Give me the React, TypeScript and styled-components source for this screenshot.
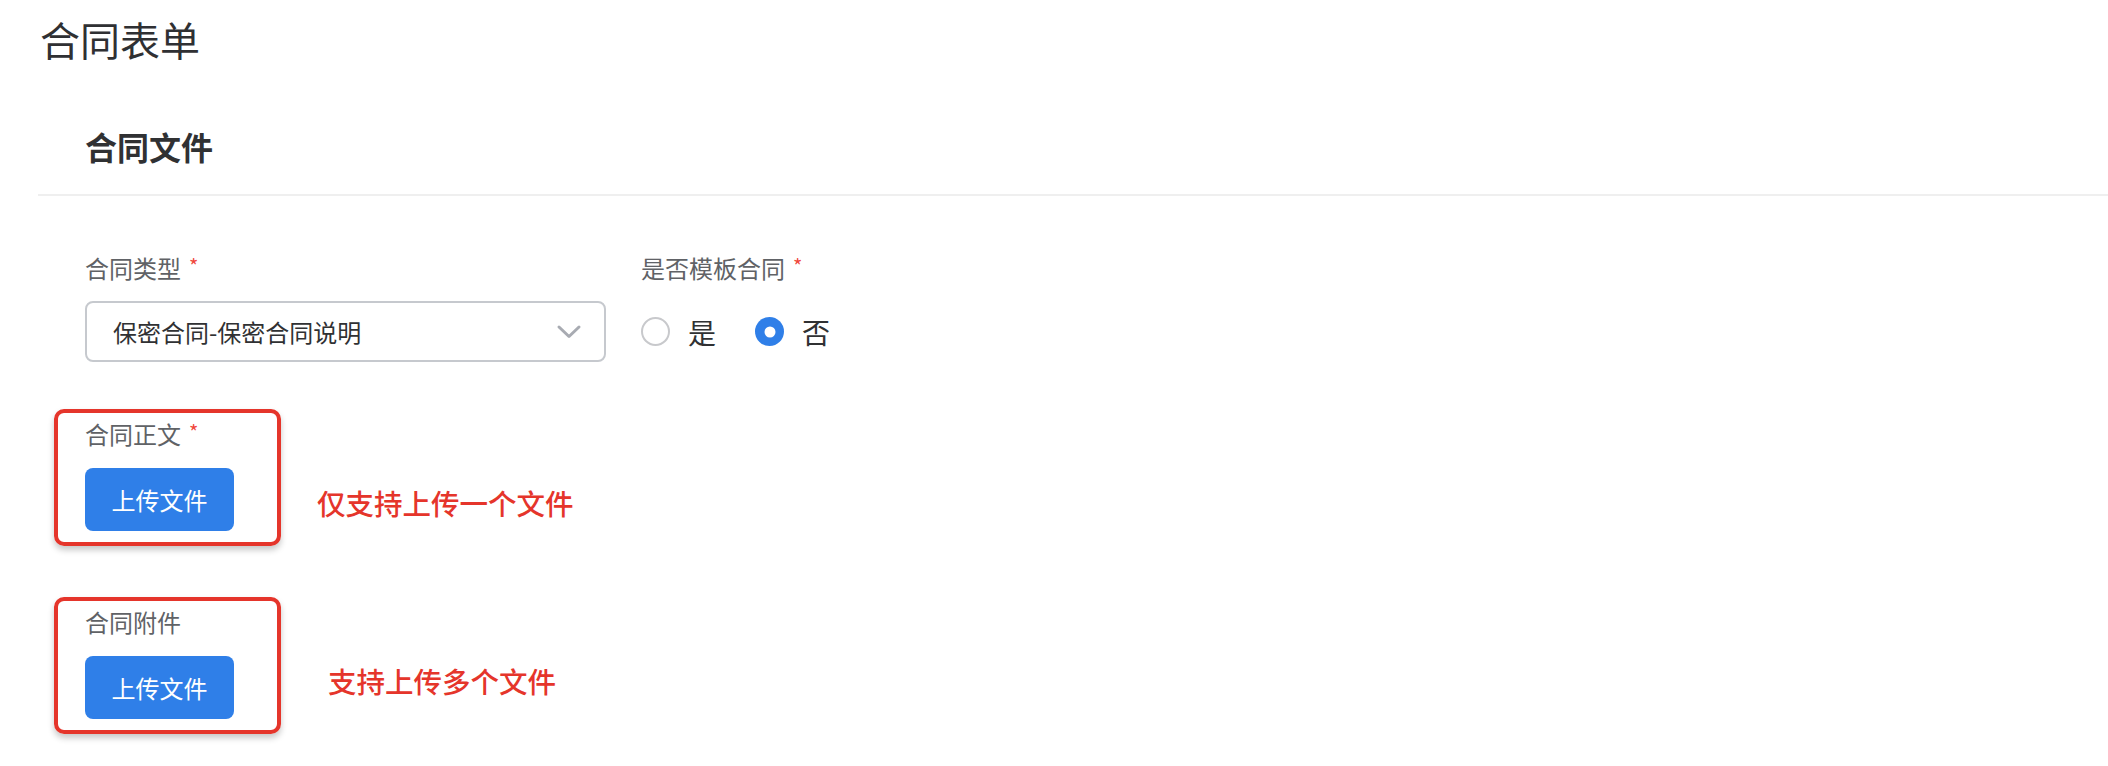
import React from "react";
import styled, { createGlobalStyle } from "styled-components";

const GlobalStyle = createGlobalStyle`
  body {
    margin: 0;
    background: #ffffff;
    font-family: "Noto Sans CJK SC", "Noto Sans", sans-serif;
  }
`;

const ChevronDown: React.FC = () => (
  <svg width="26" height="16" viewBox="0 0 26 16" fill="none">
    <path d="M3 3 L13 12.5 L23 3" stroke="#a8abb2" strokeWidth="3" strokeLinecap="round" strokeLinejoin="round" />
  </svg>
);

interface RadioProps {
  checked?: boolean;
  label: string;
}

const Radio: React.FC<RadioProps> = ({ checked, label }) => (
  <RadioItem>
    <RadioDot $checked={checked} />
    <span>{label}</span>
  </RadioItem>
);

const App: React.FC = () => {
  return (
    <Page>
      <GlobalStyle />
      <Title>合同表单</Title>
      <Section>
        <SectionHeader>合同文件</SectionHeader>
        <FormBody>
          <FieldRow>
            <Field $width={521}>
              <Label>
                合同类型<Required>*</Required>
              </Label>
              <Select>
                <span>保密合同-保密合同说明</span>
                <ChevronDown />
              </Select>
            </Field>
            <Field>
              <Label>
                是否模板合同<Required>*</Required>
              </Label>
              <RadioGroup>
                <Radio label="是" />
                <Radio label="否" checked />
              </RadioGroup>
            </Field>
          </FieldRow>

          <AnnotatedRow $top={47}>
            <Highlight>
              <Label>
                合同正文<Required>*</Required>
              </Label>
              <UploadButton>上传文件</UploadButton>
            </Highlight>
            <Note $gap={36} $lift={27}>仅支持上传一个文件</Note>
          </AnnotatedRow>

          <AnnotatedRow $top={51}>
            <Highlight>
              <Label>合同附件</Label>
              <UploadButton>上传文件</UploadButton>
            </Highlight>
            <Note $gap={47} $lift={37}>支持上传多个文件</Note>
          </AnnotatedRow>
        </FormBody>
      </Section>
    </Page>
  );
};

const Page = styled.div`
  padding: 0 0 40px 38px;
  min-height: 766px;
  box-sizing: border-box;
`;

const Title = styled.h1`
  margin: 19px 0 0 2px;
  font-size: 40px;
  line-height: 40px;
  font-weight: 400;
  color: #2f3033;
`;

const Section = styled.section`
  margin-top: 71px;
`;

const SectionHeader = styled.h2`
  margin: 0;
  padding: 0 0 32px 47px;
  font-size: 32px;
  line-height: 32px;
  font-weight: 700;
  color: #303133;
  border-bottom: 2px solid #efefef;
`;

const FormBody = styled.div`
  padding: 60px 0 0 47px;
`;

const FieldRow = styled.div`
  display: flex;
  gap: 35px;
`;

const Field = styled.div<{ $width?: number }>`
  display: flex;
  flex-direction: column;
  gap: 21px;
  width: ${(p) => (p.$width ? `${p.$width}px` : "auto")};
`;

const Label = styled.div`
  display: flex;
  align-items: flex-start;
  font-size: 24px;
  line-height: 24px;
  color: #606266;
`;

const Required = styled.span`
  margin-left: 8px;
  font-size: 20px;
  line-height: 20px;
  color: #f0473c;
`;

const Select = styled.div`
  display: flex;
  align-items: center;
  justify-content: space-between;
  height: 61px;
  box-sizing: border-box;
  padding: 0 22px 0 26px;
  border: 2px solid #c6c9ce;
  border-radius: 8px;
  font-size: 24px;
  color: #303133;
`;

const RadioGroup = styled.div`
  display: flex;
  align-items: center;
  gap: 39px;
  height: 61px;
`;

const RadioItem = styled.label`
  display: flex;
  align-items: center;
  gap: 18px;
  font-size: 28px;
  color: #303133;
`;

const RadioDot = styled.span<{ $checked?: boolean }>`
  position: relative;
  width: 29px;
  height: 29px;
  box-sizing: border-box;
  border-radius: 50%;
  border: ${(p) => (p.$checked ? "none" : "2px solid #c8c9cc")};
  background: ${(p) => (p.$checked ? "#2f7fe8" : "#fff")};
  &::after {
    content: "";
    display: ${(p) => (p.$checked ? "block" : "none")};
    position: absolute;
    left: 50%;
    top: 50%;
    width: 11px;
    height: 11px;
    border-radius: 50%;
    background: #fff;
    transform: translate(-50%, -50%);
  }
`;

const AnnotatedRow = styled.div<{ $top: number }>`
  display: flex;
  align-items: flex-end;
  margin: ${(p) => p.$top}px 0 0 -31px;
`;

const Highlight = styled.div`
  display: flex;
  flex-direction: column;
  align-items: flex-start;
  gap: 22px;
  padding: 9px 43px 11px 27px;
  border: 4px solid #e5352b;
  border-radius: 10px;
  box-shadow: 0 4px 6px rgba(0, 0, 0, 0.22);
`;

const UploadButton = styled.button`
  width: 149px;
  height: 63px;
  border: none;
  border-radius: 8px;
  background: #2f7fe8;
  color: #fff;
  font-family: inherit;
  font-size: 24px;
`;

const Note = styled.div<{ $gap: number; $lift: number }>`
  margin-left: ${(p) => p.$gap}px;
  margin-bottom: ${(p) => p.$lift}px;
  font-size: 28.5px;
  line-height: 32px;
  font-weight: 500;
  color: #e5352b;
`;

export default App;
